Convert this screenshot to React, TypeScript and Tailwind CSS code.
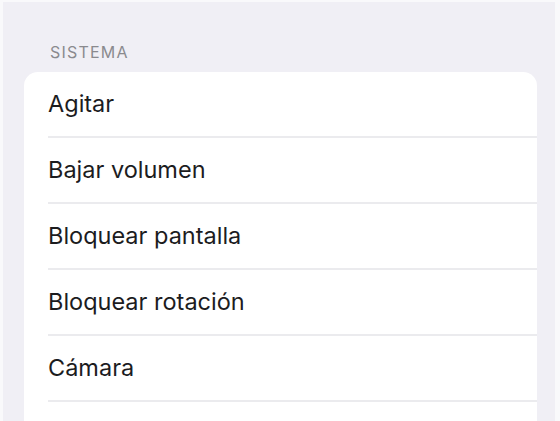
import React from "react";

const rows = [
  "Agitar",
  "Bajar volumen",
  "Bloquear pantalla",
  "Bloquear rotación",
  "Cámara",
  "Captura de pantalla",
];

export default function App() {
  return (
    <div className="h-[421px] w-[560px] overflow-hidden bg-[#f0eff5] border-t-2 border-l-[3px] border-r-[5px] border-[#f9f9fb] font-['Inter','Noto_Sans',sans-serif]">
      <div className="pl-[21px] pt-[40px]">
        {/* Section header */}
        <p className="pl-[26px] text-[16px] leading-[20px] tracking-[1.2px] text-[#8a8a8e]">
          SISTEMA
        </p>

        {/* Group */}
        <div className="mt-[10px] w-[513px] rounded-[14px] bg-white">
          {rows.map((label, i) => (
            <div key={label} className="pl-[24px]">
              <div
                className={
                  "flex h-[66px] items-center text-[23.5px] text-[#1c1c1e] " +
                  (i < rows.length - 1 ? "border-b-2 border-[#ebebee]" : "")
                }
              >
                {label}
              </div>
            </div>
          ))}
        </div>
      </div>
    </div>
  );
}
